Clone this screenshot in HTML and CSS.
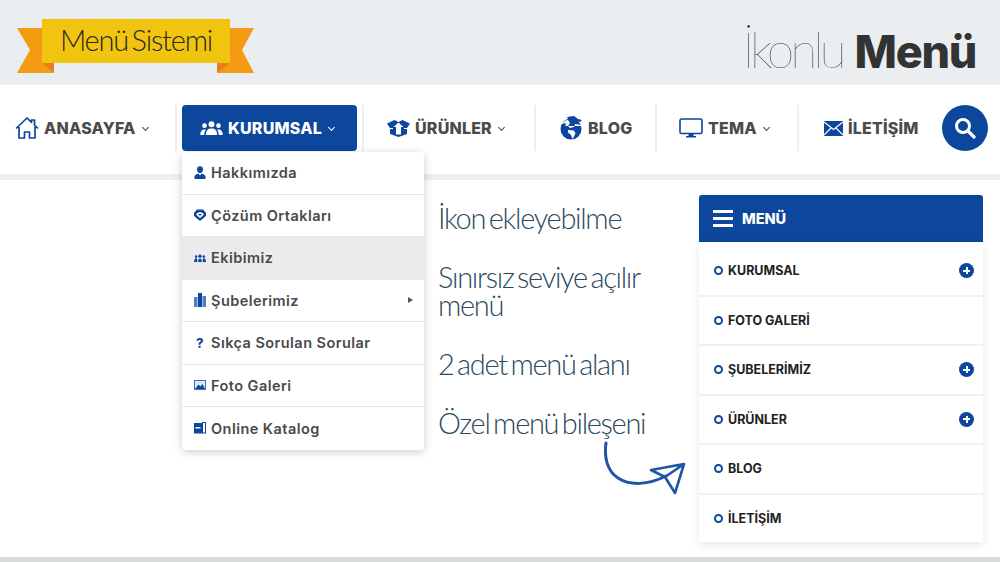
FILE: index.html
```html
<!DOCTYPE html>
<html lang="tr">
<head>
    <meta charset="UTF-8">
    <meta name="viewport" content="width=device-width, initial-scale=1.0">
    <title>İkonlu Menü</title>
    <link rel="stylesheet" href="styles.css">
</head>
<body>
    <header class="top">
        <div class="ribbon">
            <svg class="ribbon-tails" width="240" height="56" viewBox="0 0 240 56">
                <polygon fill="#f39c12" points="3,9 28,9 40,54 3,54 16,31"/>
                <polygon fill="#f39c12" points="240,9 216,9 203,54 240,54 228,31"/>
                <polygon fill="#e67e22" points="28,44 40,44 40,54"/>
                <polygon fill="#e67e22" points="216,44 203,44 203,54"/>
            </svg>
            <span class="ribbon-text">Menü Sistemi</span>
        </div>
        <div class="brand"><span class="brand-light">İkonlu</span><b>Menü</b></div>
    </header>

    <nav class="nav">
        <a class="nav-item w-home">
            <svg class="ico" width="24" height="22" viewBox="0 0 24 22"><path d="M1 11.500 12 1l4.500 4.300V3h3v5.200L23 11.500M4 10v11h5.500v-6h5v6H20V10" fill="none" stroke="#0c469d" stroke-width="1.700" stroke-linejoin="round"/></svg>
            ANASAYFA <i class="caret"></i>
        </a>
        <span class="sep"></span>
        <div class="nav-item w-corp active">
            <svg class="ico" width="23" height="14" viewBox="0 0 24 15"><g fill="#fff"><circle cx="12" cy="3.500" r="3.200"/><path d="M6 15c0-4 1-6 4-7h4c3 1 4 3 4 7z"/><circle cx="4.500" cy="5" r="2.500"/><path d="M0 15c0-3 .8-5 3-6h3c-1.200 1.500-1.600 3.500-1.700 6z"/><circle cx="19.500" cy="5" r="2.500"/><path d="M24 15c0-3-.8-5-3-6h-3c1.200 1.500 1.600 3.500 1.700 6z"/></g></svg>
            KURUMSAL <i class="caret"></i>
            <ul class="drop">
                <li><svg width="12" height="13" viewBox="0 0 12 13"><path d="M3 3.500a3 3.300 0 0 1 6 0c0 1.800-1 3.500-3 3.500S3 5.300 3 3.500z" fill="#0c469d"/><path d="M.5 13v-2.500C.5 9 2.500 8 4.500 7.500L6 9.500l1.500-2c2 .5 4 1.500 4 3V13z" fill="#0c469d"/></svg>Hakkımızda</li>
                <li><svg width="12" height="12" viewBox="0 0 12 12"><path d="M3 .5h6L12 4v3l-6 5-6-5V4z" fill="#0c469d"/><path d="M2.500 4.500 6 3l3.500 1.500V6L6 9 2.500 6z" fill="#fff"/><path d="M4 5h4L6 7z" fill="#0c469d"/></svg>Çözüm Ortakları</li>
                <li class="hover"><svg width="12" height="12" viewBox="0 0 12 12"><g fill="#0c469d"><circle cx="6" cy="4.200" r="1.600"/><circle cx="2.200" cy="4.600" r="1.300"/><circle cx="9.800" cy="4.600" r="1.300"/><path d="M4.200 10c0-2 .5-3.500 1.800-3.500S7.800 8 7.800 10zM0 10c0-2 .8-3.800 2.200-3.800l1 .4L3.300 10zM12 10c0-2-.8-3.800-2.200-3.800l-1 .4L8.700 10z"/></g></svg>Ekibimiz</li>
                <li><svg width="12" height="14" viewBox="0 0 12 14"><g fill="#0c469d"><rect x="4" y="0" width="4" height="14"/><rect x="0" y="4" width="3.500" height="10" opacity=".7"/><rect x="8.500" y="3" width="3.500" height="11" opacity=".7"/></g></svg>Şubelerimiz<i class="sub-arrow"></i></li>
                <li><span class="q">?</span>Sıkça Sorulan Sorular</li>
                <li><svg width="12" height="10" viewBox="0 0 12 10"><rect width="12" height="10" fill="#3f6fb8"/><rect x="1" y="1" width="10" height="8" fill="#dbe7f6"/><path d="M1 9 4.500 4.500l2 2L8.500 4 11 9z" fill="#0c469d"/></svg>Foto Galeri</li>
                <li><svg width="12" height="12" viewBox="0 0 12 12"><rect x="0" y="1" width="8" height="10.500" fill="#0c469d"/><rect x="8.500" y=".5" width="3" height="10.500" fill="#fff" stroke="#0c469d"/><rect x="1.500" y="5" width="5" height="1.500" fill="#fff"/></svg>Online Katalog</li>
            </ul>
        </div>
        <span class="sep"></span>
        <a class="nav-item w-prod">
            <svg class="ico" width="23" height="17" viewBox="0 0 23 17"><path d="M0 3.500 7.500 0 11.500 2 15.500 0 23 3.500 20 8v6l-8.500 3L3 14V8z" fill="#0c469d"/><path d="M6.500 7 11.500 2.500 16.500 7H14v7.500H9V7z" fill="#fff"/><path d="M0 8h6v1H0zM17 8h6v1h-6z" fill="#fff"/></svg>
            ÜRÜNLER <i class="caret"></i>
        </a>
        <span class="sep"></span>
        <a class="nav-item w-blog">
            <svg class="ico" width="23" height="24" viewBox="0 0 23 24"><circle cx="11" cy="13" r="10.500" fill="#0c469d"/><path d="M0 9c3-3 6-5 8-5l2 3-2 3 2 2 4-1 1-3 6 1 2-3-6-1-4-3 9-2v10H0zM8 14l6 .5 1.500 3-3 5.500-1.500-4-3-2.500z" fill="#fff"/><path d="M7 1l7-1 4 3 4 1-2 2-4-1-3 3-3-1 1-3-3-1zM1 9l3-2 2 1-1 3-2 1-2-1z" fill="#0c469d"/></svg>
            BLOG
        </a>
        <span class="sep"></span>
        <a class="nav-item w-theme">
            <svg class="ico" width="24" height="20" viewBox="0 0 24 20"><rect x="1" y="1" width="22" height="14.500" rx="1.500" fill="none" stroke="#0c469d" stroke-width="1.600"/><path d="M9.500 16h5v2h2.500v1.500H7V18h2.500z" fill="#0c469d"/></svg>
            TEMA <i class="caret"></i>
        </a>
        <span class="sep"></span>
        <a class="nav-item w-contact">
            <svg class="ico" width="19" height="15" viewBox="0 0 19 15"><rect width="19" height="15" fill="#0c469d"/><path d="M0 1l9.500 7.500L19 1M0 14l7-7M19 14l-7-7" fill="none" stroke="#fff" stroke-width="1.200"/></svg>
            İLETİŞİM
        </a>
        <button class="search" type="button">
            <svg width="22" height="22" viewBox="0 0 22 22"><circle cx="9" cy="9" r="6.500" fill="none" stroke="#fff" stroke-width="3"/><path d="m14 14 6 6" stroke="#fff" stroke-width="3.200" stroke-linecap="round"/></svg>
        </button>
    </nav>

    <main class="main">
        <section class="features">
            <p>İkon ekleyebilme</p>
            <p>Sınırsız seviye açılır menü</p>
            <p>2 adet menü alanı</p>
            <p class="last">Özel menü bileşeni</p>
            <svg class="arrow" width="86" height="56" viewBox="0 0 86 56">
                <path d="M2 2c-2 14 1 28 12 35 12 8 30 7 48-2" fill="none" stroke="#1f55a5" stroke-width="3" stroke-linecap="round"/>
                <path d="M47 29 80 23 71 52 61 36zM80 23 61 36" fill="none" stroke="#1f55a5" stroke-width="2.600" stroke-linejoin="round" stroke-linecap="round"/>
            </svg>
        </section>
        <aside class="side">
            <div class="side-head">
                <span class="burger"><i></i><i></i><i></i></span>
                MENÜ
            </div>
            <ul class="side-list">
                <li><i class="ring"></i>KURUMSAL<i class="plus"></i></li>
                <li><i class="ring"></i>FOTO GALERİ</li>
                <li><i class="ring"></i>ŞUBELERİMİZ<i class="plus"></i></li>
                <li><i class="ring"></i>ÜRÜNLER<i class="plus"></i></li>
                <li><i class="ring"></i>BLOG</li>
                <li><i class="ring"></i>İLETİŞİM</li>
            </ul>
        </aside>
    </main>
</body>
</html>
```

FILE: styles.css
```css
* {
    box-sizing: border-box;
}
body {
    font-family: Inter, "Noto Sans", sans-serif;
    margin: 0;
    width: 1000px;
    height: 562px;
    overflow: hidden;
    background-color: #fff;
    border-bottom: 5px solid #d8dcdc;
}
ul {
    list-style: none;
    margin: 0;
    padding: 0;
}

/* top band */
.top {
    height: 85px;
    background-color: #ebeef0;
    display: flex;
    justify-content: space-between;
    padding: 19px 24px 0 14px;
}
.ribbon {
    position: relative;
    width: 240px;
    height: 54px;
    padding-left: 28px;
}
.ribbon-tails {
    position: absolute;
    left: 0;
    top: 0;
}
.ribbon-text {
    position: relative;
    display: block;
    width: 188px;
    height: 44px;
    background-color: #f1c40f;
    color: #2b2a20;
    font-family: Lato, sans-serif;
    font-weight: 300;
    font-size: 29px;
    line-height: 41px;
    letter-spacing: -1.200px;
    word-spacing: -3px;
    text-align: center;
}
.brand {
    display: flex;
    align-items: baseline;
    line-height: 60px;
    color: #333;
    white-space: nowrap;
}
.brand-light {
    font-family: Lato, sans-serif;
    font-weight: 100;
    font-size: 50px;
    letter-spacing: -4.100px;
    margin-right: 12px;
}
.brand b {
    font-size: 45px;
    font-weight: 800;
    letter-spacing: -1.300px;
}

/* main nav */
.nav {
    height: 95px;
    padding: 20px 0 0 15px;
    border-bottom: 6px solid #eeeeee;
    display: flex;
    align-items: flex-start;
    color: #4a4a4a;
    font-weight: 800;
    font-size: 16px;
}
.nav-item {
    position: relative;
    height: 46px;
    display: flex;
    align-items: center;
    white-space: nowrap;
    letter-spacing: .2px;
}
.ico {
    margin-right: 5px;
    flex: none;
}
.sep {
    width: 2px;
    height: 46px;
    background-color: #eeeeee;
    flex: none;
}
.w-home { width: 160px; }
.w-corp {
    width: 175px;
    margin: 0 5px 0 5px;
    padding-left: 18px;
}
.w-prod { width: 170px; padding-left: 23px; }
.w-blog { width: 119px; padding-left: 24px; }
.w-theme { width: 140px; padding-left: 22px; }
.w-contact { width: 143px; padding-left: 25px; }
.active {
    background-color: #0c469d;
    color: #fff;
    border-radius: 4px;
}
.caret {
    width: 5px;
    height: 5px;
    margin: -2px 0 0 7px;
    border-right: 1px solid currentColor;
    border-bottom: 1px solid currentColor;
    transform: rotate(45deg);
}
.search {
    width: 46px;
    height: 46px;
    padding: 0;
    border: 0;
    border-radius: 50%;
    background-color: #0c469d;
    display: flex;
    align-items: center;
    justify-content: center;
    flex: none;
}

/* dropdown */
.drop {
    position: absolute;
    left: 0;
    top: 47px;
    width: 242px;
    background-color: #fff;
    border-radius: 4px;
    box-shadow: 0 2px 10px rgba(0, 0, 0, .2);
    color: #4a4a4a;
    font-size: 14.500px;
    font-weight: 600;
    letter-spacing: .45px;
    z-index: 5;
}
.drop li {
    height: 42.500px;
    padding-left: 12px;
    display: flex;
    align-items: center;
    gap: 5px;
    border-bottom: 1px solid #e8e8e8;
}
.drop li:last-child {
    border-bottom: 0;
}
.drop li svg,
.q {
    width: 12px;
    flex: none;
}
.q {
    color: #0c469d;
    font-weight: 800;
    font-size: 13px;
    text-align: center;
}
.drop .hover {
    background-color: #ebebeb;
}
.sub-arrow {
    margin-left: auto;
    margin-right: 11px;
    border-left: 5px solid #555;
    border-top: 3.500px solid transparent;
    border-bottom: 3.500px solid transparent;
}

/* content */
.main {
    display: flex;
    padding-left: 438px;
}
.features {
    width: 261px;
    padding-top: 24px;
    color: #2c4a5e;
    font-family: Lato, sans-serif;
    font-weight: 300;
    font-size: 29px;
    line-height: 28px;
    letter-spacing: -1.300px;
    word-spacing: -3px;
}
.features p {
    margin: 0 0 31px;
    width: 215px;
}
.features .last {
    margin-bottom: 4px;
    width: 240px;
}
.arrow {
    display: block;
    margin-left: 166px;
}

/* side menu */
.side {
    width: 284px;
    padding-top: 15px;
}
.side-head {
    height: 47px;
    padding-left: 14px;
    background-color: #0c469d;
    border-radius: 3px 3px 0 0;
    color: #fff;
    font-weight: 800;
    font-size: 14.500px;
    display: flex;
    align-items: center;
    gap: 9px;
}
.burger {
    width: 20px;
    display: flex;
    flex-direction: column;
    gap: 4px;
}
.burger i {
    height: 3px;
    background-color: #fff;
}
.side-list {
    padding-top: 5px;
    box-shadow: 0 3px 8px rgba(0, 0, 0, .1);
}
.side-list li {
    height: 49.500px;
    padding: 0 9px 0 15px;
    display: flex;
    align-items: center;
    border-bottom: 2px solid #f1f1f1;
    color: #222;
    font-size: 12.500px;
    font-weight: 700;
}
.side-list li:last-child {
    height: 47.500px;
    border-bottom: 0;
}
.ring {
    width: 9px;
    height: 9px;
    margin-right: 5px;
    border: 2px solid #0c469d;
    border-radius: 50%;
}
.plus {
    position: relative;
    width: 15px;
    height: 15px;
    margin-left: auto;
    border-radius: 50%;
    background-color: #0c469d;
}
.plus::before,
.plus::after {
    content: "";
    position: absolute;
    background-color: #fff;
}
.plus::before {
    left: 4px;
    top: 6.500px;
    width: 7px;
    height: 2px;
}
.plus::after {
    left: 6.500px;
    top: 4px;
    width: 2px;
    height: 7px;
}
```
